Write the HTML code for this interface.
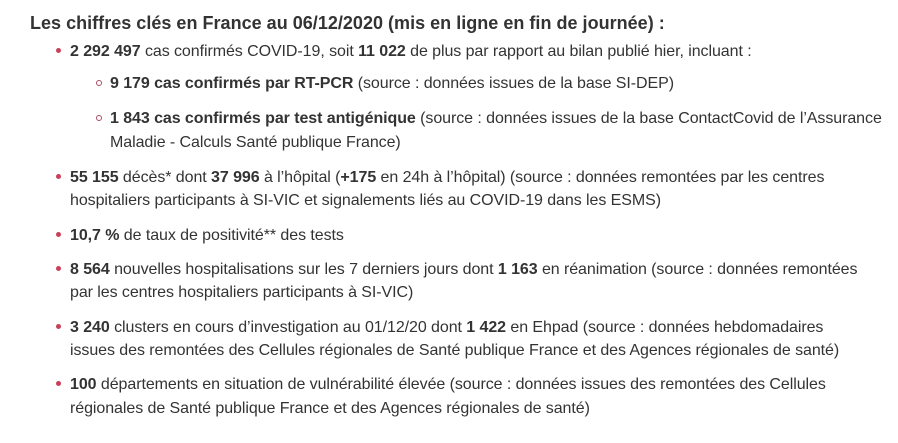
<!DOCTYPE html>
<html><head><meta charset="utf-8"><style>
body{margin:0;width:898px;height:443px;background:#fff;font-family:"Liberation Sans",Arial,sans-serif;color:#333;position:relative;overflow:hidden}
.l{position:absolute;white-space:nowrap;font-size:16px;line-height:20px;letter-spacing:-0.07px}
.t{position:absolute;left:30px;top:13px;font-size:18px;font-weight:bold;white-space:nowrap;letter-spacing:0.02px;color:#333}
b{font-weight:bold;color:#333}
.d{position:absolute;width:5px;height:5px;border-radius:50%;background:#c8415a}
.o{position:absolute;width:4px;height:4px;border-radius:50%;border:1px solid #b04a62;background:#fff}
</style></head><body>
<div class="t">Les chiffres clés en France au 06/12/2020 (mis en ligne en fin de journée) :</div>

<div class="d" style="left:56px;top:48px"></div>
<div class="l" style="left:70px;top:42px"><b>2 292 497</b> cas confirmés COVID-19, soit <b>11 022</b> de plus par rapport au bilan publié hier, incluant :</div>

<div class="o" style="left:96px;top:80px"></div>
<div class="l" style="left:110px;top:74px"><b>9 179 cas confirmés par RT-PCR</b> (source : données issues de la base SI-DEP)</div>

<div class="o" style="left:96px;top:115px"></div>
<div class="l" style="left:110px;top:109px"><b>1 843 cas confirmés par test antigénique</b> (source : données issues de la base ContactCovid de l’Assurance</div>
<div class="l" style="left:110px;top:133px">Maladie - Calculs Santé publique France)</div>

<div class="d" style="left:56px;top:174px"></div>
<div class="l" style="left:70px;top:168px"><b>55 155</b> décès* dont <b>37 996</b> à l’hôpital (<b>+175</b> en 24h à l’hôpital) (source : données remontées par les centres</div>
<div class="l" style="left:70px;top:191px">hospitaliers participants à SI-VIC et signalements liés au COVID-19 dans les ESMS)</div>

<div class="d" style="left:56px;top:232px"></div>
<div class="l" style="left:70px;top:226px"><b>10,7 %</b> de taux de positivité** des tests</div>

<div class="d" style="left:56px;top:266px"></div>
<div class="l" style="left:70px;top:260px"><b>8 564</b> nouvelles hospitalisations sur les 7 derniers jours dont <b>1 163</b> en réanimation (source : données remontées</div>
<div class="l" style="left:70px;top:283px">par les centres hospitaliers participants à SI-VIC)</div>

<div class="d" style="left:56px;top:324px"></div>
<div class="l" style="left:70px;top:318px"><b>3 240</b> clusters en cours d’investigation au 01/12/20 dont <b>1 422</b> en Ehpad (source : données hebdomadaires</div>
<div class="l" style="left:70px;top:341px">issues des remontées des Cellules régionales de Santé publique France et des Agences régionales de santé)</div>

<div class="d" style="left:56px;top:381px"></div>
<div class="l" style="left:70px;top:375px"><b>100</b> départements en situation de vulnérabilité élevée (source : données issues des remontées des Cellules</div>
<div class="l" style="left:70px;top:399px">régionales de Santé publique France et des Agences régionales de santé)</div>
</body></html>
